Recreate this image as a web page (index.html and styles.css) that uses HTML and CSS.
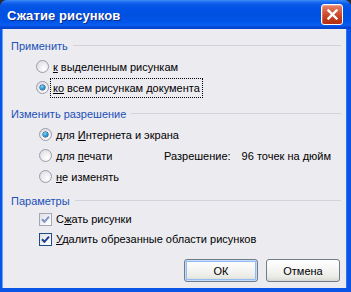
FILE: index.html
```html
<!DOCTYPE html>
<html lang="ru">
<head>
<meta charset="utf-8">
<title>Сжатие рисунков</title>
<link rel="stylesheet" href="styles.css">
</head>
<body>
<div class="window">
  <div class="titlebar">
    <span class="title">Сжатие рисунков</span>
    <button class="close" aria-label="Закрыть">
      <svg width="11" height="11" viewBox="0 0 11 11"><path d="M1.5 1.5 L9.5 9.5 M9.5 1.5 L1.5 9.5" stroke="#fff" stroke-width="2.4" stroke-linecap="square"/></svg>
    </button>
  </div>
  <div class="client">
    <div class="group-label"><span>Применить</span><i class="rule"></i></div>
    <div class="rows rows-apply">
      <div class="row"><span class="radio"></span><span class="text"><u>к</u> выделенным рисункам</span></div>
      <div class="row"><span class="radio checked"></span><span class="text focus"><u>ко</u> всем рисункам документа</span></div>
    </div>

    <div class="group-label gap-2"><span>Изменить разрешение</span><i class="rule"></i></div>
    <div class="rows rows-res">
      <div class="row"><span class="radio checked"></span><span class="text">для <u>И</u>нтернета и экрана</span></div>
      <div class="row"><span class="radio"></span><span class="text short">для <u>п</u>ечати</span><span class="res-label">Разрешение:</span><span class="res-value">96 точек на дюйм</span></div>
      <div class="row"><span class="radio"></span><span class="text"><u>н</u>е изменять</span></div>
    </div>

    <div class="group-label gap-3"><span>Параметры</span><i class="rule"></i></div>
    <div class="rows rows-opt">
      <div class="row row-tight"><span class="check dim"><svg width="11" height="11" viewBox="0 0 11 11"><path d="M2 5.2 L4.4 7.8 L9 2.6" fill="none" stroke="#7d93c4" stroke-width="2"/></svg></span><span class="text">С<u>ж</u>ать рисунки</span></div>
      <div class="row row-tight"><span class="check"><svg width="11" height="11" viewBox="0 0 11 11"><path d="M2 5.2 L4.4 7.8 L9 2.6" fill="none" stroke="#1f3f94" stroke-width="2"/></svg></span><span class="text"><u>У</u>далить обрезанные области рисунков</span></div>
    </div>

    <div class="buttons">
      <button class="btn default">ОК</button>
      <button class="btn">Отмена</button>
    </div>
  </div>
</div>
</body>
</html>
```
FILE: styles.css
```css
* { box-sizing: border-box; }
html, body { margin: 0; padding: 0; }
body {
  background: #2b2b2b;
  width: 351px;
  height: 292px;
  overflow: hidden;
  font-family: "Liberation Sans", Arial, sans-serif;
  font-size: 11px;
  color: #000;
}
.window {
  width: 351px;
  height: 292px;
  display: flex;
  flex-direction: column;
  background: #0a55e6;
  border-radius: 7px 7px 0 0;
  overflow: hidden;
}
.titlebar {
  height: 29px;
  flex: none;
  display: flex;
  align-items: center;
  padding: 2px 7px 0 7px;
  background: linear-gradient(to bottom,
    #3b8cf7 0px, #1f6ef2 2px, #0c5ae8 4px, #0053e6 8px, #0051e1 16px, #0055ea 22px, #0a5ef0 25px, #0548d8 27px, #0642c8 29px);
}
.title {
  flex: 1;
  color: #fff;
  font-weight: bold;
  font-size: 13px;
  letter-spacing: 0.1px;
  text-shadow: 1px 1px 0 #0d2a8a;
}
.close {
  width: 22px;
  height: 21px;
  margin: 0 1px 2px 0;
  padding: 0;
  border: 1px solid #fff;
  border-radius: 3px;
  background: linear-gradient(to bottom, #e9866a 0%, #d4553a 40%, #c23818 75%, #b33014 100%);
  display: flex;
  align-items: center;
  justify-content: center;
  box-shadow: inset 1px 1px 0 rgba(255,255,255,0.25);
}
.client {
  flex: 1;
  margin: 0 5px 4px 3px;
  background: #ecebf0;
  padding: 8px 5px 0 8px;
  display: flex;
  flex-direction: column;
  box-shadow: -1px 0 0 #5ea2ff, 1px 0 0 #2b75f0;
}
.group-label {
  height: 17px;
  display: flex;
  align-items: center;
  color: #2051b8;
}
.group-label .rule {
  flex: 1;
  height: 1px;
  margin-left: 5px;
  background: #d3d2da;
}
.gap-2 { margin-top: 7px; }
.gap-3 { margin-top: 5px; }
.rows { display: flex; flex-direction: column; margin-top: 2px; }
.rows-apply { padding-left: 25px; }
.rows-res { padding-left: 28px; }
.rows-opt { padding-left: 28px; margin-top: 0; }
.row {
  height: 21px;
  display: flex;
  align-items: center;
}
.row-tight { height: 20px; }
.radio {
  width: 13px;
  height: 13px;
  flex: none;
  border-radius: 50%;
  border: 1px solid #9c9ca8;
  background: radial-gradient(circle at 65% 70%, #ffffff 0%, #f2f2f4 35%, #d6d6de 100%);
  position: relative;
}
.radio.checked::after {
  content: "";
  position: absolute;
  left: 3px;
  top: 3px;
  width: 5px;
  height: 5px;
  border-radius: 50%;
  background: radial-gradient(circle at 40% 35%, #7ee0ff 0%, #2a9ad8 45%, #0d4d8c 100%);
  box-shadow: 0 0 0 0.5px #0d3a6a;
}
.text {
  margin-left: 3px;
  padding: 1px 1px;
  white-space: nowrap;
  line-height: 14px;
}
.text u { text-underline-offset: 1px; }
.focus {
  outline: 1px dotted #000;
  outline-offset: 1px;
}
.short { width: 109px; }
.res-label { margin-left: 0; }
.res-value { margin-left: 11px; }
.check {
  width: 13px;
  height: 13px;
  flex: none;
  border: 1px solid #1c4d85;
  background: linear-gradient(135deg, #dfe0e6 0%, #f4f4f6 60%, #ffffff 100%);
  display: flex;
  align-items: center;
  justify-content: center;
}
.check.dim { border-color: #a3a6b6; }
.buttons {
  display: flex;
  justify-content: flex-end;
  gap: 8px;
  margin-top: 10px;
  padding-right: 1px;
}
.btn {
  width: 74px;
  height: 23px;
  padding: 0;
  font-family: "Liberation Sans", Arial, sans-serif;
  font-size: 11px;
  color: #000;
  border: 1px solid #6f7c8a;
  border-radius: 3px;
  background: linear-gradient(to bottom, #ffffff 0%, #f6f6f5 40%, #ebebe6 80%, #d8d8d2 100%);
}
.btn.default {
  box-shadow: inset 0 0 0 1px #c6dcfb, inset 0 0 0 2px #93bdf2;
}
```
